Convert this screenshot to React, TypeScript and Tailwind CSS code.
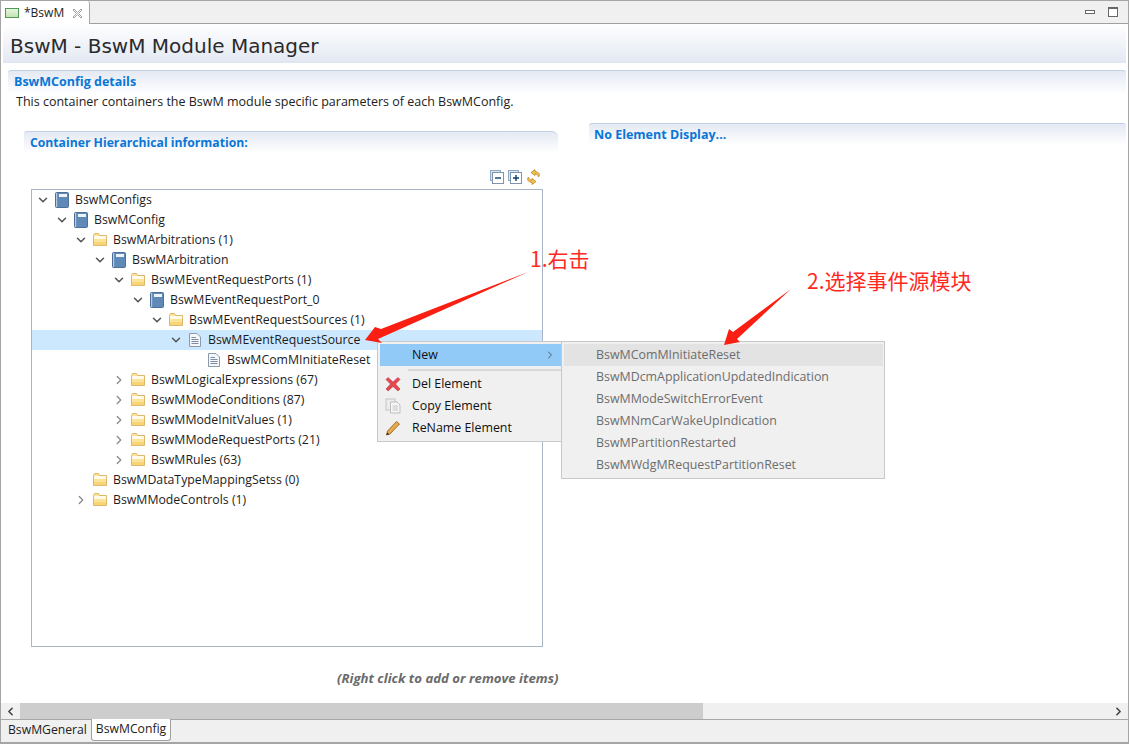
import {ChevronDown, ChevronLeft, ChevronRight} from "lucide-react";

type RowKind = "book" | "folder" | "doc";

type TreeRow = {
  depth: number;
  kind: RowKind;
  label: string;
  chevron?: "open" | "closed";
  selected?: boolean;
};

const treeRows: TreeRow[] = [
  {depth: 0, kind: "book", label: "BswMConfigs", chevron: "open"},
  {depth: 1, kind: "book", label: "BswMConfig", chevron: "open"},
  {depth: 2, kind: "folder", label: "BswMArbitrations (1)", chevron: "open"},
  {depth: 3, kind: "book", label: "BswMArbitration", chevron: "open"},
  {depth: 4, kind: "folder", label: "BswMEventRequestPorts (1)", chevron: "open"},
  {depth: 5, kind: "book", label: "BswMEventRequestPort_0", chevron: "open"},
  {depth: 6, kind: "folder", label: "BswMEventRequestSources (1)", chevron: "open"},
  {depth: 7, kind: "doc", label: "BswMEventRequestSource", chevron: "open", selected: true},
  {depth: 8, kind: "doc", label: "BswMComMInitiateReset"},
  {depth: 4, kind: "folder", label: "BswMLogicalExpressions (67)", chevron: "closed"},
  {depth: 4, kind: "folder", label: "BswMModeConditions (87)", chevron: "closed"},
  {depth: 4, kind: "folder", label: "BswMModeInitValues (1)", chevron: "closed"},
  {depth: 4, kind: "folder", label: "BswMModeRequestPorts (21)", chevron: "closed"},
  {depth: 4, kind: "folder", label: "BswMRules (63)", chevron: "closed"},
  {depth: 2, kind: "folder", label: "BswMDataTypeMappingSetss (0)"},
  {depth: 2, kind: "folder", label: "BswMModeControls (1)", chevron: "closed"}
];

const subMenuItems = [
  "BswMComMInitiateReset",
  "BswMDcmApplicationUpdatedIndication",
  "BswMModeSwitchErrorEvent",
  "BswMNmCarWakeUpIndication",
  "BswMPartitionRestarted",
  "BswMWdgMRequestPartitionReset"
];

const BookIcon = () => (
  <svg width="14" height="16" viewBox="0 0 14 16" className="shrink-0">
    <rect x="0.5" y="0.5" width="13" height="15" rx="1" fill="#6f94bd" stroke="#4d7098" />
    <rect x="3" y="1" width="10" height="14" fill="#5f8ab8" />
    <rect x="4" y="2" width="8" height="3" fill="#eef3f9" />
    <rect x="1" y="1" width="1" height="14" fill="#b6cbe0" />
  </svg>
);

const FolderIcon = () => (
  <svg width="14" height="13" viewBox="0 0 14 13" className="shrink-0">
    <path d="M0.5 2.5 L0.5 12.5 L13.5 12.5 L13.5 2.5 L6.5 2.5 L5.5 0.5 L1.5 0.5 Z" fill="#fbe39a" stroke="#dcb96a" />
    <rect x="1" y="3" width="12" height="3" fill="#fffbe8" />
    <rect x="1" y="9" width="12" height="3" fill="#f7d576" />
  </svg>
);

const DocIcon = () => (
  <svg width="12" height="14" viewBox="0 0 12 14" className="shrink-0">
    <path d="M0.5 0.5 L8 0.5 L11.5 4 L11.5 13.5 L0.5 13.5 Z" fill="#f4f6fa" stroke="#8c98ac" />
    <path d="M2.5 4.5 H7 M2.5 6.5 H9.5 M2.5 8.5 H9.5 M2.5 10.5 H9.5" stroke="#7e8ba3" />
  </svg>
);

const TreeRowView = ({row}: {row: TreeRow}) => (
  <div className={`flex h-5 items-center ${row.selected ? "bg-[#cce8ff]" : ""}`}>
    <div className="shrink-0" style={{width: row.depth * 19 + 3}} />
    <div className="flex w-[16px] shrink-0 items-center justify-center">
      {row.chevron === "open" && <ChevronDown size={14} strokeWidth={2.6} className="text-[#555]" />}
      {row.chevron === "closed" && <ChevronRight size={14} strokeWidth={2.2} className="text-[#8a8a8a]" />}
    </div>
    <div className="flex w-[20px] shrink-0 items-center justify-center pl-[1px]">
      {row.kind === "book" && <BookIcon />}
      {row.kind === "folder" && <FolderIcon />}
      {row.kind === "doc" && <DocIcon />}
    </div>
    <span className="ml-[4px] whitespace-nowrap text-[12.3px] text-[#1c1c1c]">{row.label}</span>
  </div>
);

const SectionTitle = ({title, className}: {title: string; className: string}) => (
  <div className={`rounded-tl-[3px] rounded-tr-[3px] border-t border-[#c3d0e3] bg-gradient-to-b from-[#e4e9f3] to-white font-bold text-[#0a76d6] ${className}`}>
    {title}
  </div>
);

const ToolbarIcons = () => (
  <div className="flex h-[20px] items-center justify-end gap-[4px] pr-[1px]">
    <svg width="14" height="14" viewBox="0 0 14 14">
      <rect x="0.5" y="0.5" width="10" height="10" fill="#dce6f2" stroke="#8faac8" />
      <rect x="2.5" y="2.5" width="11" height="11" fill="#fff" stroke="#7f93ab" />
      <path d="M5 8 H11" stroke="#0b3f6b" strokeWidth="1.4" />
    </svg>
    <svg width="14" height="14" viewBox="0 0 14 14">
      <rect x="0.5" y="0.5" width="10" height="10" fill="#dce6f2" stroke="#8faac8" />
      <rect x="2.5" y="2.5" width="11" height="11" fill="#fff" stroke="#7f93ab" />
      <path d="M5 8 H11 M8 5 V11" stroke="#0b3f6b" strokeWidth="1.4" />
    </svg>
    <svg width="15" height="16" viewBox="0 0 15 16">
      <path d="M9 0.5 L5 3.5 L9 6.5 V5 C11 5 12 6 12.5 8 C14.5 5.5 13 3 9 2.5 Z" fill="#f3c14e" stroke="#b9862a" strokeWidth="0.8" />
      <path d="M6 15.5 L10 12.5 L6 9.5 V11 C4 11 3 10 2.5 8 C0.5 10.5 2 13 6 13.5 Z" fill="#f3c14e" stroke="#b9862a" strokeWidth="0.8" />
    </svg>
  </div>
);

const ContextMenus = () => (
  <>
    <div className="absolute left-[376px] top-[341px] h-[101px] w-[185px] border border-r-0 border-[#c8c8c8] bg-[#f0f0f0] pl-[2px] pt-[2px] text-[#111]">
      <div className="flex h-[22px] items-center bg-[#91c9f7] pl-[32px] pr-[6px]">
        <span>New</span>
        <ChevronRight size={12} strokeWidth={1.6} className="ml-auto text-[#444]" />
      </div>
      <div className="ml-[28px] mt-[3px] h-[2px] bg-[#d8d8d8]" />
      <div className="mt-[2px]">
        <div className="flex h-[22px] items-center">
          <svg width="16" height="16" viewBox="0 0 16 16" className="ml-[5px] shrink-0">
            <path d="M3 1.5 L8 6 L13 1.5 L15 3.5 L10.5 8 L15 13 L13 15 L8 10.5 L3 15 L1 13 L5.5 8 L1 3.5 Z" fill="#e4474f" stroke="#bb3b44" strokeWidth="0.6" />
          </svg>
          <span className="ml-[11px]">Del Element</span>
        </div>
        <div className="flex h-[22px] items-center">
          <svg width="16" height="16" viewBox="0 0 16 16" className="ml-[5px] shrink-0">
            <rect x="1" y="1" width="9" height="11" fill="#ececec" stroke="#c4c4c4" />
            <path d="M5.5 4 L12 4 L15 7 L15 15 L5.5 15 Z" fill="#f7f7f7" stroke="#bdbdbd" />
            <path d="M7.5 8 H13 M7.5 10 H13 M7.5 12 H13" stroke="#c4c4c4" />
          </svg>
          <span className="ml-[11px]">Copy Element</span>
        </div>
        <div className="flex h-[22px] items-center">
          <svg width="16" height="16" viewBox="0 0 16 16" className="ml-[5px] shrink-0">
            <path d="M11.5 1.5 L14.5 4 L5 14 L1.5 15 L2.5 11 Z" fill="#e8a94a" stroke="#8a5a1f" strokeWidth="0.8" />
            <path d="M1.5 15 L2.2 12.4 L4.2 14.2 Z" fill="#2b2b2b" />
          </svg>
          <span className="ml-[11px]">ReName Element</span>
        </div>
      </div>
    </div>
    <div className="absolute left-[560px] top-[341px] h-[138px] w-[324px] border border-[#c8c8c8] bg-[#f0f0f0] pl-[2px] pr-[1px] pt-[2px] text-[#6d6d6d]">
      {subMenuItems.map((item, index) => (
        <div
          key={item}
          className={`flex h-[22px] items-center pl-[32px] ${index === 0 ? "bg-[#e3e3e3]" : ""}`}
        >
          {item}
        </div>
      ))}
    </div>
  </>
);

const Annotations = () => (
  <>
    <svg width="1129" height="744" viewBox="0 0 1129 744" className="pointer-events-none absolute left-[-1px] top-0">
      <polygon points="528,272 381,329 375,327 365,340 382,343 378,339" fill="#fa1f12" />
      <polygon points="791,289 733,332 729,329 724,345 740,342 737,339" fill="#fa1f12" />
    </svg>
    <div className="absolute left-[529px] top-[244px] font-['Noto_Sans_CJK_SC',sans-serif] text-[21px] leading-[28px] text-[#ff2a1f]">
      1.右击
    </div>
    <div className="absolute left-[806px] top-[266px] font-['Noto_Sans_CJK_SC',sans-serif] text-[21px] leading-[28px] text-[#ff2a1f]">
      2.选择事件源模块
    </div>
  </>
);

export default function App() {
  return (
    <div className="relative flex h-[744px] w-[1129px] flex-col overflow-hidden border-x border-b-2 border-x-[#a5a5a5] border-b-[#a5a5a5] bg-white font-['Open_Sans',sans-serif] text-[12.4px]">
      <div className="flex h-[24px] shrink-0 border-t border-b border-t-[#a5a5a5] border-b-[#a0a0a0] bg-[#f0f0f0]">
        <div className="flex h-[24px] w-[89px] items-center rounded-tr-[3px] border-r border-[#a5a5a5] bg-white pl-[4px] text-[#222]">
          <div className="h-[10px] w-[14px] border border-[#4f9a5a] bg-gradient-to-b from-[#e6f5dc] to-[#c4e4b4]" />
          <span className="ml-[5px] text-[12px]">*BswM</span>
          <svg width="11" height="11" viewBox="0 0 11 11" className="ml-[8px]">
            <path d="M1 2 L2 1 L5.5 4.5 L9 1 L10 2 L6.5 5.5 L10 9 L9 10 L5.5 6.5 L2 10 L1 9 L4.5 5.5 Z" fill="#fff" stroke="#8a8a8a" strokeWidth="0.8" />
          </svg>
        </div>
        <div className="ml-auto flex items-center gap-[13px] pr-[10px]">
          <div className="h-[4px] w-[10px] border border-[#666] bg-white" />
          <div className="h-[10px] w-[10px] border border-[#666] border-t-2 bg-white" />
        </div>
      </div>

      <div className="mx-[2px] flex h-[39px] shrink-0 items-center border-b-2 border-[#dfe6f0] bg-gradient-to-b from-white to-[#e4e9f3] pl-[7px] pt-[7px] font-['DejaVu_Sans',sans-serif] text-[20px] text-[#2b2b2b]">
        BswM - BswM Module Manager
      </div>

      <div className="min-h-0 flex-1 pl-[7px] pr-[2px] pt-[7px]">
        <SectionTitle title="BswMConfig details" className="h-[24px] pl-[6px] pt-[2px] text-[12.5px]" />
        <p className="ml-[8px] mt-[-1px] text-[12.5px] text-[#222]">This container containers the BswM module specific parameters of each BswMConfig.</p>

        <div className="mt-[19px] flex">
          <div className="ml-[16px] w-[535px] shrink-0">
            <SectionTitle title="Container Hierarchical information:" className="h-[22px] w-[534px] rounded-tr-[6px] pl-[6px] pt-[2px] text-[12.2px]" />
            <div className="mt-[14px] w-[518px]">
              <ToolbarIcons />
            </div>
            <div className="ml-[7px] mt-[2px] h-[458px] w-[512px] border border-[#a9b5c5]">
              {treeRows.map((row) => (
                <TreeRowView key={row.label} row={row} />
              ))}
            </div>
            <p className="ml-[313px] mt-[22px] whitespace-nowrap text-[13.2px] font-bold italic text-[#6b6b6b]">(Right click to add or remove items)</p>
          </div>
          <div className="ml-[30px] mt-[-8px] flex-1">
            <SectionTitle title="No Element Display..." className="h-[22px] pl-[5px] pt-[2px] text-[12.5px]" />
          </div>
        </div>
      </div>

      <div className="flex h-[16px] shrink-0 items-center bg-[#f0f0f0]">
        <div className="flex w-[19px] justify-center text-[#444]">
          <ChevronLeft size={13} strokeWidth={3} />
        </div>
        <div className="h-full w-[683px] bg-[#cdcdcd]" />
        <div className="ml-auto flex w-[19px] justify-center text-[#444]">
          <ChevronRight size={13} strokeWidth={3} />
        </div>
      </div>

      <div className="flex h-[23px] shrink-0 border-t border-[#a8a8a8] bg-[#f0f0f0] pl-[7px] text-[12.2px] text-[#222]">
        <div className="flex h-[21px] w-[83px] items-center">BswMGeneral</div>
        <div className="mt-[-1px] flex h-[22px] w-[80px] items-center justify-center rounded-b-[3px] border-x border-b border-[#a0a0a0] bg-white">
          BswMConfig
        </div>
      </div>

      <ContextMenus />
      <Annotations />
    </div>
  );
}
